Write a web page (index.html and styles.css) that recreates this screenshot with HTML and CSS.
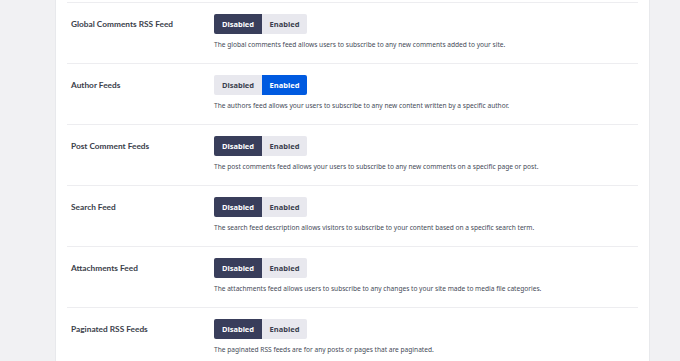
FILE: index.html
```html
<!DOCTYPE html>
<html lang="en">
<head>
    <meta charset="UTF-8">
    <meta name="viewport" content="width=device-width, initial-scale=1.0">
    <title>RSS Feed Settings</title>
    <link rel="stylesheet" href="styles.css">
</head>
<body>
    <div class="page">
        <div class="sidebar"></div>
        <div class="card">
            <div class="setting-row">
                <div class="setting-label">Global Comments RSS Feed</div>
                <div class="setting-control">
                    <div class="toggle">
                        <button class="toggle-btn off active">Disabled</button>
                        <button class="toggle-btn on">Enabled</button>
                    </div>
                    <p class="setting-desc">The global comments feed allows users to subscribe to any new comments added to your site.</p>
                </div>
            </div>
            <div class="setting-row">
                <div class="setting-label">Author Feeds</div>
                <div class="setting-control">
                    <div class="toggle">
                        <button class="toggle-btn off">Disabled</button>
                        <button class="toggle-btn on active">Enabled</button>
                    </div>
                    <p class="setting-desc">The authors feed allows your users to subscribe to any new content written by a specific author.</p>
                </div>
            </div>
            <div class="setting-row">
                <div class="setting-label">Post Comment Feeds</div>
                <div class="setting-control">
                    <div class="toggle">
                        <button class="toggle-btn off active">Disabled</button>
                        <button class="toggle-btn on">Enabled</button>
                    </div>
                    <p class="setting-desc">The post comments feed allows your users to subscribe to any new comments on a specific page or post.</p>
                </div>
            </div>
            <div class="setting-row">
                <div class="setting-label">Search Feed</div>
                <div class="setting-control">
                    <div class="toggle">
                        <button class="toggle-btn off active">Disabled</button>
                        <button class="toggle-btn on">Enabled</button>
                    </div>
                    <p class="setting-desc">The search feed description allows visitors to subscribe to your content based on a specific search term.</p>
                </div>
            </div>
            <div class="setting-row">
                <div class="setting-label">Attachments Feed</div>
                <div class="setting-control">
                    <div class="toggle">
                        <button class="toggle-btn off active">Disabled</button>
                        <button class="toggle-btn on">Enabled</button>
                    </div>
                    <p class="setting-desc">The attachments feed allows users to subscribe to any changes to your site made to media file categories.</p>
                </div>
            </div>
            <div class="setting-row">
                <div class="setting-label">Paginated RSS Feeds</div>
                <div class="setting-control">
                    <div class="toggle">
                        <button class="toggle-btn off active">Disabled</button>
                        <button class="toggle-btn on">Enabled</button>
                    </div>
                    <p class="setting-desc">The paginated RSS feeds are for any posts or pages that are paginated.</p>
                </div>
            </div>
        </div>
        <div class="sidebar right"></div>
    </div>
</body>
</html>
```

FILE: styles.css
```css
body {
    margin: 0;
    background-color: #f1f1f3;
    font-family: 'Noto Sans', 'Open Sans', sans-serif;
    color: #393f4c;
    overflow: hidden;
}

.page {
    display: flex;
    height: 361px;
}

.sidebar {
    width: 55px;
    flex-shrink: 0;
}

.sidebar.right {
    width: 30px;
}

.card {
    width: 595px;
    box-sizing: border-box;
    background-color: #ffffff;
    border-left: 1px solid #e8e9ec;
    border-right: 1px solid #e8e9ec;
    padding: 2px 11px 0 11px;
}

.setting-row {
    display: grid;
    grid-template-columns: 147px 1fr;
    border-top: 1px solid #ededf0;
    padding: 11px 0 13px 0;
}

.setting-label {
    font-family: 'Lato', 'Noto Sans', sans-serif;
    font-size: 8.3px;
    font-weight: 700;
    line-height: 20px;
    padding-left: 4px;
    color: #3a3e4a;
}

.toggle {
    display: flex;
}

.toggle-btn {
    font-family: inherit;
    font-size: 7.5px;
    font-weight: 700;
    height: 20px;
    padding: 0;
    border: none;
    border-radius: 2px;
    background-color: #e8e8ee;
    color: #3b3f4f;
}

.toggle-btn.off {
    width: 48px;
    border-radius: 2px 0 0 2px;
}

.toggle-btn.on {
    width: 45px;
    border-radius: 0 2px 2px 0;
}

.toggle-btn.off.active {
    background-color: #393e5b;
    color: #ffffff;
}

.toggle-btn.on.active {
    background-color: #005ae0;
    color: #ffffff;
}

.setting-desc {
    margin: 6px 0 0 0;
    font-size: 6.6px;
    line-height: 10px;
    color: #454a57;
}
```
